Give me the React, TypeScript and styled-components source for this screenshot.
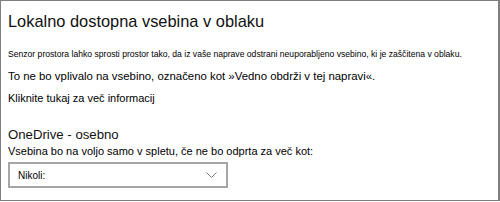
import React from "react";
import styled, { createGlobalStyle } from "styled-components";

const GlobalStyle = createGlobalStyle`
    html, body {
        margin: 0;
        padding: 0;
        background: #ffffff;
    }

    body {
        font-family: "Liberation Sans", Arial, sans-serif;
        color: #000000;
    }
`;

const Frame = styled.div`
    display: flex;
    flex-direction: column;

    width: 500px;
    height: 201px;
    padding: 9px 7px 0 7px;

    box-sizing: border-box;
    border: 1px solid #7f7f7f;
    border-right-width: 2px;

    background-color: #ffffff;
`;

const Title = styled.h1`
    margin: 0;

    font-size: 16.4px;
    font-weight: 400;
    line-height: 22px;
    color: #111111;
`;

const Line = styled.p<{ size: number; top: number }>`
    margin: ${props => props.top}px 0 0 0;

    font-size: ${props => props.size}px;
    line-height: 16px;
    white-space: nowrap;
`;

const Link = styled(Line)`
    cursor: pointer;
`;

const SectionTitle = styled.h2`
    margin: 20px 0 0 0;

    font-size: 13.2px;
    font-weight: 400;
    line-height: 17px;
    color: #111111;
`;

const Select = styled.div`
    display: flex;
    flex-direction: row;
    align-items: center;
    justify-content: space-between;

    width: 220px;
    height: 26px;
    margin-top: 3px;
    padding: 0 9px 0 8px;

    box-sizing: border-box;
    border: 2px solid #a6a6a6;

    font-size: 10px;
`;

function Chevron() {
    return (
        <svg width="11" height="6" viewBox="0 0 11 6">
            <path d="M0.5 0.5 L5.5 5.5 L10.5 0.5" fill="none" stroke="#7a7a7a" strokeWidth="1"/>
        </svg>
    );
}

export default function App() {
    return (
        <>
            <GlobalStyle/>
            <Frame>
                <Title>Lokalno dostopna vsebina v oblaku</Title>
                <Line size={8.6} top={14}>
                    Senzor prostora lahko sprosti prostor tako, da iz vaše naprave odstrani neuporabljeno vsebino, ki je zaščitena v oblaku.
                </Line>
                <Line size={11.4} top={6}>
                    To ne bo vplivalo na vsebino, označeno kot »Vedno obdrži v tej napravi«.
                </Line>
                <Link size={11} top={6}>Kliknite tukaj za več informacij</Link>
                <SectionTitle>OneDrive - osebno</SectionTitle>
                <Line size={11} top={0}>
                    Vsebina bo na voljo samo v spletu, če ne bo odprta za več kot:
                </Line>
                <Select>
                    <span>Nikoli:</span>
                    <Chevron/>
                </Select>
            </Frame>
        </>
    );
}
